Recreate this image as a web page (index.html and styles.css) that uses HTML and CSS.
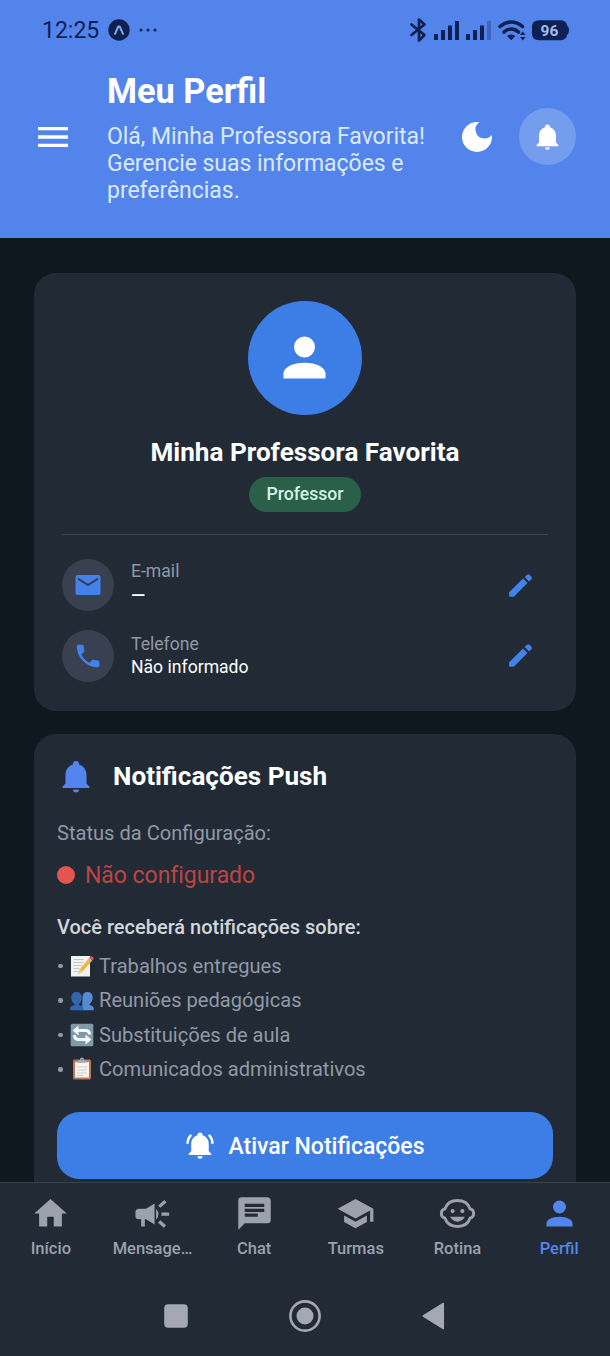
FILE: index.html
```html
<!DOCTYPE html>
<html lang="pt-BR">
<head>
<meta charset="utf-8">
<title>Meu Perfil</title>
<link rel="stylesheet" href="styles.css">
</head>
<body>
<div class="screen">
  <header class="header">
    <div class="status">
      <span class="clock">12:25</span>
      <svg class="app-dot" viewBox="0 0 22 22"><circle cx="11" cy="11" r="10.7" fill="#0e2150"/><path d="M7 14.800 10.300 7.500h1.400l3.300 7.300" fill="none" stroke="#86a5e6" stroke-width="2" stroke-linecap="round" stroke-linejoin="round"/></svg>
      <svg class="dots" viewBox="0 0 18 4"><circle cx="2" cy="2" r="1.5"/><circle cx="9" cy="2" r="1.5"/><circle cx="16" cy="2" r="1.5"/></svg>
      <svg class="signals" viewBox="0 0 162 26">
        <path d="M2.500 7.500l13 10.500-5.500 5.500v-21l5.500 5L2.500 18" fill="none" stroke="#0e2150" stroke-width="2.700" stroke-linejoin="round" stroke-linecap="round"/>
        <g transform="translate(-.5 -2)">
        <path d="M25.500 19h4v6h-4zM32.500 15h4v10h-4zM39.500 10.500h4V25h-4zM46.500 6h4v19h-4zM57.500 19h4v6h-4zM64.500 15h4v10h-4zM71.500 10.500h4V25h-4z"/>
        <path d="M78.500 6h4v19h-4z" opacity=".3"/>
        <path d="M91.500 11.500c7-6 15.500-6 22.500 0M95.500 17c4.500-4 10-4 14.500 0" fill="none" stroke="#0e2150" stroke-width="3.600" stroke-linecap="round"/>
        <path d="M98.500 21q4.200-3 8.400 0L102.700 25.200zM111.500 20l2.800-3.600 2.800 3.600zM111.500 22l2.800 3.600 2.800-3.600z"/>
        <path d="M131 5.200h20c4.500 0 7 1.800 7.500 5q2 1.300 2 5t-2 5c-.5 3.200-3 5-7.500 5h-20c-5 0-7.500-2.800-7.500-6.500v-7c0-3.700 2.500-6.500 7.500-6.500z"/>
        <text x="141" y="20.800" text-anchor="middle" class="battery-text">96</text>
        </g>
      </svg>
    </div>
    <div class="header-main">
      <svg class="menu" viewBox="0 0 24 24"><path d="M3 6h18v2H3zm0 5h18v2H3zm0 5h18v2H3z"/></svg>
      <div class="heading">
        <h1>Meu Perfil</h1>
        <p>Olá, Minha Professora Favorita!<br>Gerencie suas informações e<br>preferências.</p>
      </div>
      <svg class="moon" viewBox="0 0 24 24"><path d="M12 3a9 9 0 1 0 9 9c0-.46-.04-.92-.1-1.36a5.389 5.389 0 0 1-4.4 2.260 5.403 5.403 0 0 1-3.140-9.800c-.44-.06-.9-.1-1.360-.1z"/></svg>
      <div class="bell-button"><svg viewBox="0 0 24 24"><path d="M21 19v1H3v-1l2-2v-6c0-3.100 2.030-5.830 5-6.710V4a2 2 0 0 1 4 0v.29c2.970.88 5 3.610 5 6.710v6l2 2m-7 2a2 2 0 0 1-4 0"/></svg></div>
    </div>
  </header>

  <main class="content">
    <section class="card profile">
      <div class="avatar"><svg viewBox="0 0 24 24"><path d="M12 4a4 4 0 1 1 0 8 4 4 0 0 1 0-8m0 10c4.420 0 8 1.790 8 4v2H4v-2c0-2.210 3.580-4 8-4z"/></svg></div>
      <h2 class="name">Minha Professora Favorita</h2>
      <span class="role">Professor</span>
      <div class="contacts">
        <div class="contact">
          <div class="contact-icon"><svg viewBox="0 0 24 24"><path d="M20 8l-8 5-8-5V6l8 5 8-5m0-2H4c-1.110 0-2 .89-2 2v12a2 2 0 0 0 2 2h16a2 2 0 0 0 2-2V6a2 2 0 0 0-2-2z"/></svg></div>
          <div class="contact-text email"><span class="label">E-mail</span><span class="value dash">—</span></div>
          <svg class="pencil" viewBox="0 0 24 24"><path d="M3.200 17.200 14 6.600l3.400 3.400L6.800 20.700H3.900q-.7 0-.7-.7zM15.200 5.500l1.900-1.800q.9-.8 1.800 0l1.600 1.600q.9.900 0 1.800l-1.900 1.800z"/></svg>
        </div>
        <div class="contact">
          <div class="contact-icon"><svg viewBox="0 0 24 24"><path d="M6.620 10.790c1.440 2.830 3.760 5.150 6.590 6.590l2.200-2.200c.28-.28.67-.36 1.020-.25 1.120.37 2.320.57 3.570.57a1 1 0 0 1 1 1V20a1 1 0 0 1-1 1A17 17 0 0 1 3 4a1 1 0 0 1 1-1h3.500a1 1 0 0 1 1 1c0 1.250.2 2.450.57 3.570.11.35.03.74-.25 1.020l-2.200 2.200z"/></svg></div>
          <div class="contact-text"><span class="label">Telefone</span><span class="value">Não informado</span></div>
          <svg class="pencil" viewBox="0 0 24 24"><path d="M3.200 17.200 14 6.600l3.400 3.400L6.800 20.700H3.900q-.7 0-.7-.7zM15.200 5.500l1.900-1.800q.9-.8 1.800 0l1.600 1.600q.9.900 0 1.800l-1.900 1.800z"/></svg>
        </div>
      </div>
    </section>

    <section class="card push">
      <div class="push-head">
        <svg viewBox="0 0 24 24"><path d="M21 19v1H3v-1l2-2v-6c0-3.100 2.030-5.830 5-6.710V4a2 2 0 0 1 4 0v.29c2.970.88 5 3.610 5 6.710v6l2 2m-7 2a2 2 0 0 1-4 0"/></svg>
        <h2>Notificações Push</h2>
      </div>
      <p class="config-label">Status da Configuração:</p>
      <p class="config-state"><i class="red-dot"></i><span>Não configurado</span></p>
      <p class="about">Você receberá notificações sobre:</p>
      <ul class="topics">
        <li><span class="bullet"></span>
          <svg viewBox="0 0 24 24"><path d="M1 2h19v20.500H1z" fill="#f3f3ee"/><path d="M3.500 5.500h10M3.500 8.500h10M3.500 11.500h9M3.500 14.500h6M3.500 17.500h5" stroke="#b9c4c9" stroke-width=".9"/><path d="M8 20.500l1.700-5.300L19.200 4l3 2.400-9.800 11.300z" fill="#f3b548"/><path d="M9.700 15.200l2.700 2.500L8 20.500z" fill="#e8d3a2"/><path d="M18.300 5l1-1.200 3 2.400-1 1.200z" fill="#aab5ba"/><path d="M19.300 3.800c1-1.800 2.300-1.800 3.500-.8s1.100 2.200-.5 3.200z" fill="#dd5563"/></svg>
          Trabalhos entregues</li>
        <li><span class="bullet"></span>
          <svg viewBox="0 0 24 24"><g transform="translate(0 1.300)"><g fill="#568bd0"><path d="M12.500 8.500c0-4 2-5.700 5-5.700s5.200 2 5.200 5.500c0 3-1.500 5.600-3.200 6.500v1c2.500.6 4.300 1.500 4.300 3.500V21H12z"/></g><g fill="#3367ad"><path d="M1.300 8.500C1.300 4.800 3.500 2.800 6.600 2.800s5.200 2 5.200 5.700c0 3-1.300 5.400-3 6.300v1c2.800.6 4.400 1.700 4.400 3.700V21H.2v-1.500c0-2 1.800-3.100 4.400-3.700v-1c-1.900-.9-3.300-3.300-3.300-6.300z"/></g></g></svg>
          Reuniões pedagógicas</li>
        <li><span class="bullet"></span>
          <svg viewBox="0 0 24 24"><rect x=".7" y=".7" width="22.600" height="22.600" rx="1.500" fill="#7f9ba6"/><g fill="none" stroke="#f5f8f8" stroke-width="3"><path d="M19.500 11.500q0-4-4-4H7M4.500 12q0 4.500 4 4.500h9"/></g><path d="M2.500 7.500l6-5v10zM21.500 16.500l-6-5v10z" fill="#f5f8f8"/></svg>
          Substituições de aula</li>
        <li><span class="bullet"></span>
          <svg viewBox="0 0 24 24"><rect x="3" y="2.500" width="18" height="20" rx="1.500" fill="#bd7751"/><path d="M5 5h14v15.500H5z" fill="#f5f5f2"/><path d="M7 10h10M7 13h10M7 16h10M7 18.500h6" stroke="#c4c7c7" stroke-width=".8"/><path d="M7.500 6V3.500H10q0-3 2-3t2 3h2.500V6z" fill="#a7b5ba"/><circle cx="12" cy="2.700" r=".8" fill="#51616a"/></svg>
          Comunicados administrativos</li>
      </ul>
      <div class="activate">
        <svg viewBox="0 0 24 24"><path d="M21 19v1H3v-1l2-2v-6c0-3.100 2.030-5.830 5-6.710V4a2 2 0 0 1 4 0v.29c2.970.88 5 3.610 5 6.710v6l2 2m-7 2a2 2 0 0 1-4 0m9.750-17.810l-1.420 1.420A8.982 8.982 0 0 1 21 11h2c0-2.930-1.160-5.750-3.250-7.810M1 11h2c0-2.400.96-4.700 2.670-6.390L4.250 3.190A10.960 10.960 0 0 0 1 11z"/></svg>
        <span>Ativar Notificações</span>
      </div>
    </section>
  </main>

  <nav class="tabs">
    <div class="tab"><svg viewBox="0 0 24 24"><path d="M10 20v-6h4v6h5v-8h3L12 3 2 12h3v8h5z"/></svg><span>Início</span></div>
    <div class="tab"><svg viewBox="0 0 24 24"><path d="M13.300 5.800v13l-5.300-3.300h-.7v4.500H5v-4.500H3.500A2 2 0 0 1 1.500 13.500v-2.200A2.200 2.200 0 0 1 3.700 9.100H8zM14.200 9q3 3.400 0 6.800zM17.500 11.400h4.700v2h-4.700zM15.500 7l3.800-3.300 1.300 1.500-3.800 3.300zM16.800 16.200l3.500 3-1.300 1.600-3.600-3.100z"/></svg><span>Mensage…</span></div>
    <div class="tab"><svg viewBox="0 0 24 24"><path d="M20 2H4a2 2 0 0 0-2 2v18l4-4h14a2 2 0 0 0 2-2V4c0-1.110-.9-2-2-2M6 9h12v2H6m8 3H6v-2h8m4-4H6V6h12"/></svg><span>Chat</span></div>
    <div class="tab"><svg viewBox="0 0 24 24"><path d="M12 3 1 9l11 6 9-4.910V17h2V9M5 13.180v4L12 21l7-3.820v-4L12 17l-7-3.820z"/></svg><span>Turmas</span></div>
    <div class="tab"><svg viewBox="0 0 24 24"><path d="M12 4c3.900 0 6.700 2.100 7.800 5.200a2.900 2.900 0 0 1 0 5.600C18.700 17.900 15.900 20 12 20s-6.700-2.100-7.800-5.200a2.900 2.900 0 0 1 0-5.600C5.300 6.100 8.100 4 12 4z" fill="none" stroke="currentColor" stroke-width="1.800"/><circle cx="9" cy="10.500" r="1.300"/><circle cx="15" cy="10.500" r="1.300"/><path d="M7.500 14h9c-.8 1.900-2.500 3-4.500 3s-3.700-1.100-4.500-3z"/></svg><span>Rotina</span></div>
    <div class="tab active"><svg viewBox="0 0 24 24"><path d="M12 4a4 4 0 1 1 0 8 4 4 0 0 1 0-8m0 10c4.420 0 8 1.790 8 4v2H4v-2c0-2.210 3.580-4 8-4z"/></svg><span>Perfil</span></div>
  </nav>
  <div class="system-nav">
    <svg viewBox="0 0 34 34"><rect x="5.200" y="5.200" width="23.600" height="23.600" rx="4"/></svg>
    <svg viewBox="0 0 34 34"><circle cx="17" cy="17" r="14.600" fill="none" stroke="#a3a8b4" stroke-width="2.600"/><circle cx="17" cy="17" r="8.500"/></svg>
    <svg viewBox="0 0 34 34"><path d="M6.300 17 26.300 4.500v25z" stroke="#a3a8b4" stroke-width="1.500" stroke-linejoin="round"/></svg>
  </div>
</div>
</body>
</html>
```
FILE: styles.css
```css
* { box-sizing: border-box; }
body { margin: 0; background: #10181f; font-family: Roboto, "Liberation Sans", sans-serif; }
h1, h2, p, ul { margin: 0; padding: 0; }
svg { display: block; flex: none; fill: currentColor; }

.screen { width: 610px; height: 1356px; display: flex; flex-direction: column; overflow: hidden; }

.header { height: 238px; flex: none; background: #5384eb; color: #fff; }
.status { height: 59px; padding: 0 39px 0 42px; display: flex; align-items: center; color: #0e2150; }
.clock { font-size: 23px; line-height: 30px; width: 66px; padding-top: 2px; }
.app-dot { width: 22px; height: 22px; }
.dots { width: 18px; height: 4px; margin-left: 9px; }
.signals { width: 162px; height: 26px; margin-left: auto; }
.battery-text { font-size: 15.500px; font-weight: 700; fill: #a5bdf0; }
.header-main { display: flex; align-items: center; padding: 10px 34px 0 33px; }
.menu { width: 40px; height: 40px; }
.heading { margin-left: 34px; width: 350px; padding-top: 2px; }
h1 { font-size: 34.300px; line-height: 40px; font-weight: 700; margin-bottom: 12px; }
.heading p { font-size: 23px; letter-spacing: -.04px; line-height: 27px; color: #dae9ff; white-space: nowrap; }
.moon { width: 40px; height: 40px; }
.bell-button { width: 57px; height: 57px; margin-left: auto; border-radius: 50%; background: #759dee; display: flex; align-items: center; justify-content: center; }
.bell-button svg { width: 29px; height: 29px; }

.content { height: 944px; flex: none; overflow: hidden; padding: 34.500px 34.500px 0 34px; }
.card { background: #212a35; border-radius: 22px; }
.profile { height: 438px; padding: 28.500px 27.500px 28.500px 28px; display: flex; flex-direction: column; align-items: center; color: #fff; }
.avatar { width: 114px; height: 114px; border-radius: 50%; background: #3d7ee6; display: flex; align-items: center; justify-content: center; }
.avatar svg { width: 63px; height: 63px; margin: 0 1px 1px 0; }
.name { margin-top: 20.500px; font-size: 26.100px; line-height: 32px; font-weight: 700; }
.role { margin-top: 9.500px; width: 112px; height: 34.500px; border-radius: 18px; background: #2a6049; color: #d3f5e3; font-size: 17.600px; line-height: 35px; font-weight: 500; text-align: center; }
.contacts { width: 100%; margin-top: 22.500px; padding-top: 24px; border-top: 1.500px solid #3a434f; display: grid; gap: 18.500px; }
.contact { display: flex; align-items: center; height: 52px; }
.contact-icon { width: 52px; height: 52px; border-radius: 50%; background: #394150; color: #4382ea; display: flex; align-items: center; justify-content: center; }
.contact-icon svg { width: 30px; height: 30px; }
.contact-text { margin-left: 17px; display: grid; font-size: 17.600px; line-height: 23px; padding-top: 1px; }
.email { padding: 0 0 2px; }
.label { color: #9299a6; }
.value { color: #fff; }
.dash { font-weight: 500; font-size: 18.500px; padding-top: 2px; }
.pencil { width: 31px; height: 31px; margin-left: auto; margin-right: 12px; color: #4382ea; }

.push { margin-top: 23px; height: 480px; padding: 21.500px 22.500px 0 23px; }
.push-head { display: flex; align-items: center; height: 42px; color: #5485ee; }
.push-head svg { width: 36px; height: 36px; margin-left: 1px; }
.push-head h2 { margin-left: 19px; color: #fff; font-size: 26.100px; line-height: 32px; font-weight: 700; }
.config-label { margin-top: 21.500px; font-size: 20.100px; line-height: 28px; color: #9299a6; }
.config-state { margin-top: 13px; display: flex; align-items: center; gap: 10px; font-size: 23px; letter-spacing: -.04px; line-height: 32px; color: #c04341; }
.red-dot { width: 18px; height: 18px; border-radius: 50%; background: #e3564f; margin-bottom: 1px; }
.about { margin-top: 21px; font-size: 20px; line-height: 28px; font-weight: 500; color: #d1d6df; }
.topics { margin-top: 8px; list-style: none; font-size: 20.100px; line-height: 34.500px; color: #9299a6; }
.topics li { display: flex; align-items: center; }
.bullet { width: 4.500px; height: 4.500px; margin: 0 7px 0 1px; border-radius: 50%; background: #9299a6; }
.topics svg { width: 24px; height: 24px; margin-right: 5.500px; }
.activate { margin-top: 25px; height: 67px; border-radius: 22px; background: #3d7ee6; color: #fff; display: flex; align-items: center; justify-content: center; gap: 13px; font-size: 23px; line-height: 30px; font-weight: 500; }
.activate svg { width: 30px; height: 30px; }
.activate span { padding-top: 3px; }

.tabs { height: 94px; flex: none; padding-top: 11px; border-top: 1.500px solid #39414c; background: #212a35; color: #9ca1ae; display: grid; grid-template-columns: repeat(6, 1fr); }
.tab { display: flex; flex-direction: column; align-items: center; font-size: 16.500px; line-height: 22px; font-weight: 500; }
.tab svg { width: 39px; height: 39px; margin-bottom: 5px; }
.active { color: #5485ee; }
.system-nav { height: 80px; flex: none; padding: 0 159px; background: #212a35; color: #a3a8b4; display: flex; justify-content: space-between; align-items: center; }
.system-nav svg { width: 34px; height: 34px; }
```
